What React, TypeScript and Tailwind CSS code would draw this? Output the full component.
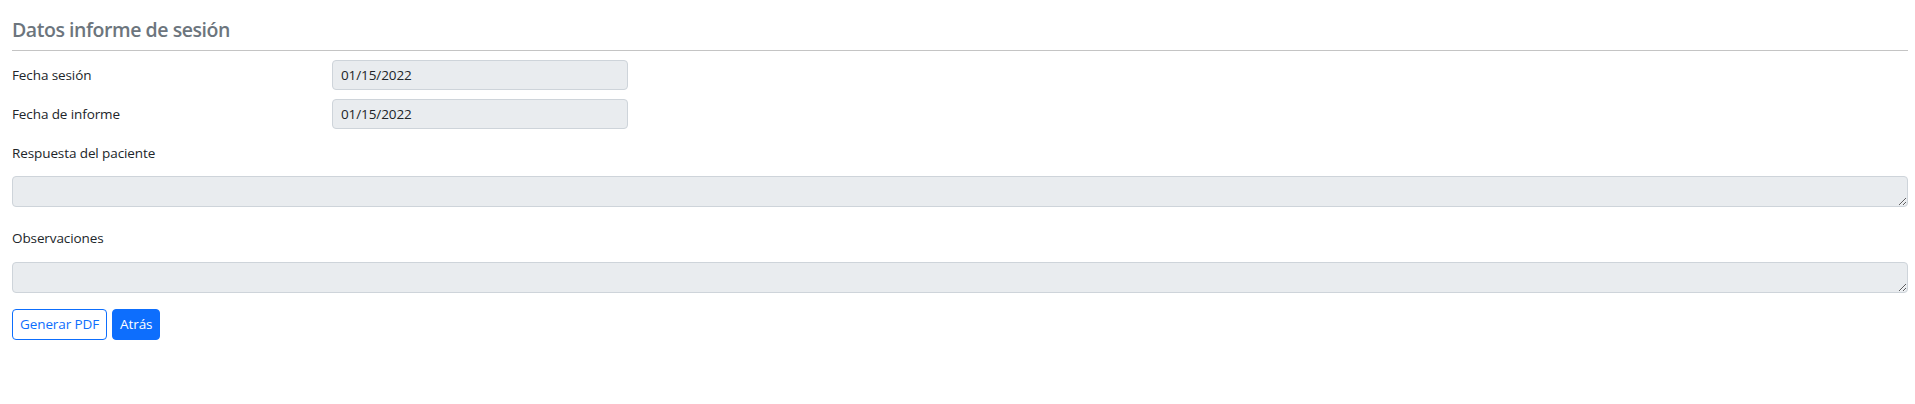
import React from "react";

const font = { fontFamily: '"Segoe UI", "Open Sans", "Noto Sans", sans-serif' };

function DateRow({ label, value, mt }: { label: string; value: string; mt: string }) {
  return (
    <div className={`flex items-center ${mt}`}>
      <div className="w-[320px] text-[13.5px] tracking-[-0.1px] leading-[21px] text-[#212529]">{label}</div>
      <div className="w-[296px] h-[30px] flex items-center px-[8px] bg-[#e9ecef] border border-[#ced4da] rounded-[4px] text-[13.5px] tracking-[-0.1px] text-[#212529]">
        {value}
      </div>
    </div>
  );
}

function Area({ mt }: { mt: string }) {
  return (
    <textarea
      disabled
      rows={1}
      className={`block w-full h-[31px] ${mt} bg-[#e9ecef] border border-[#ced4da] rounded-[4px] resize-y text-[14px] px-[8px] py-[4px]`}
    />
  );
}

export default function App() {
  return (
    <div className="w-full min-h-[404px] bg-white" style={font}>
      <div className="pl-[12px] pr-[7px] pt-[18px]">
        <h5 className="text-[19.5px] leading-[24px] font-semibold tracking-[-0.45px] text-[#6c757d] pb-[8px] border-b border-[#c4c4c4]">
          Datos informe de sesión
        </h5>
        <DateRow label="Fecha sesión" value="01/15/2022" mt="mt-[9px]" />
        <DateRow label="Fecha de informe" value="01/15/2022" mt="mt-[9px]" />
        <div className="mt-[14px] text-[13.5px] tracking-[-0.1px] leading-[21px] text-[#212529]">Respuesta del paciente</div>
        <Area mt="mt-[12px]" />
        <div className="mt-[21px] text-[13.5px] tracking-[-0.1px] leading-[21px] text-[#212529]">Observaciones</div>
        <Area mt="mt-[13px]" />
        <div className="flex gap-[5px] mt-[16px]">
          <button className="h-[31px] px-[7px] text-[13.5px] tracking-[-0.1px] text-[#0d6efd] bg-white border border-[#0d6efd] rounded-[4px]">
            Generar PDF
          </button>
          <button className="h-[31px] px-[7px] text-[13.5px] tracking-[-0.1px] text-white bg-[#0d6efd] border border-[#0d6efd] rounded-[4px]">
            Atrás
          </button>
        </div>
      </div>
    </div>
  );
}
